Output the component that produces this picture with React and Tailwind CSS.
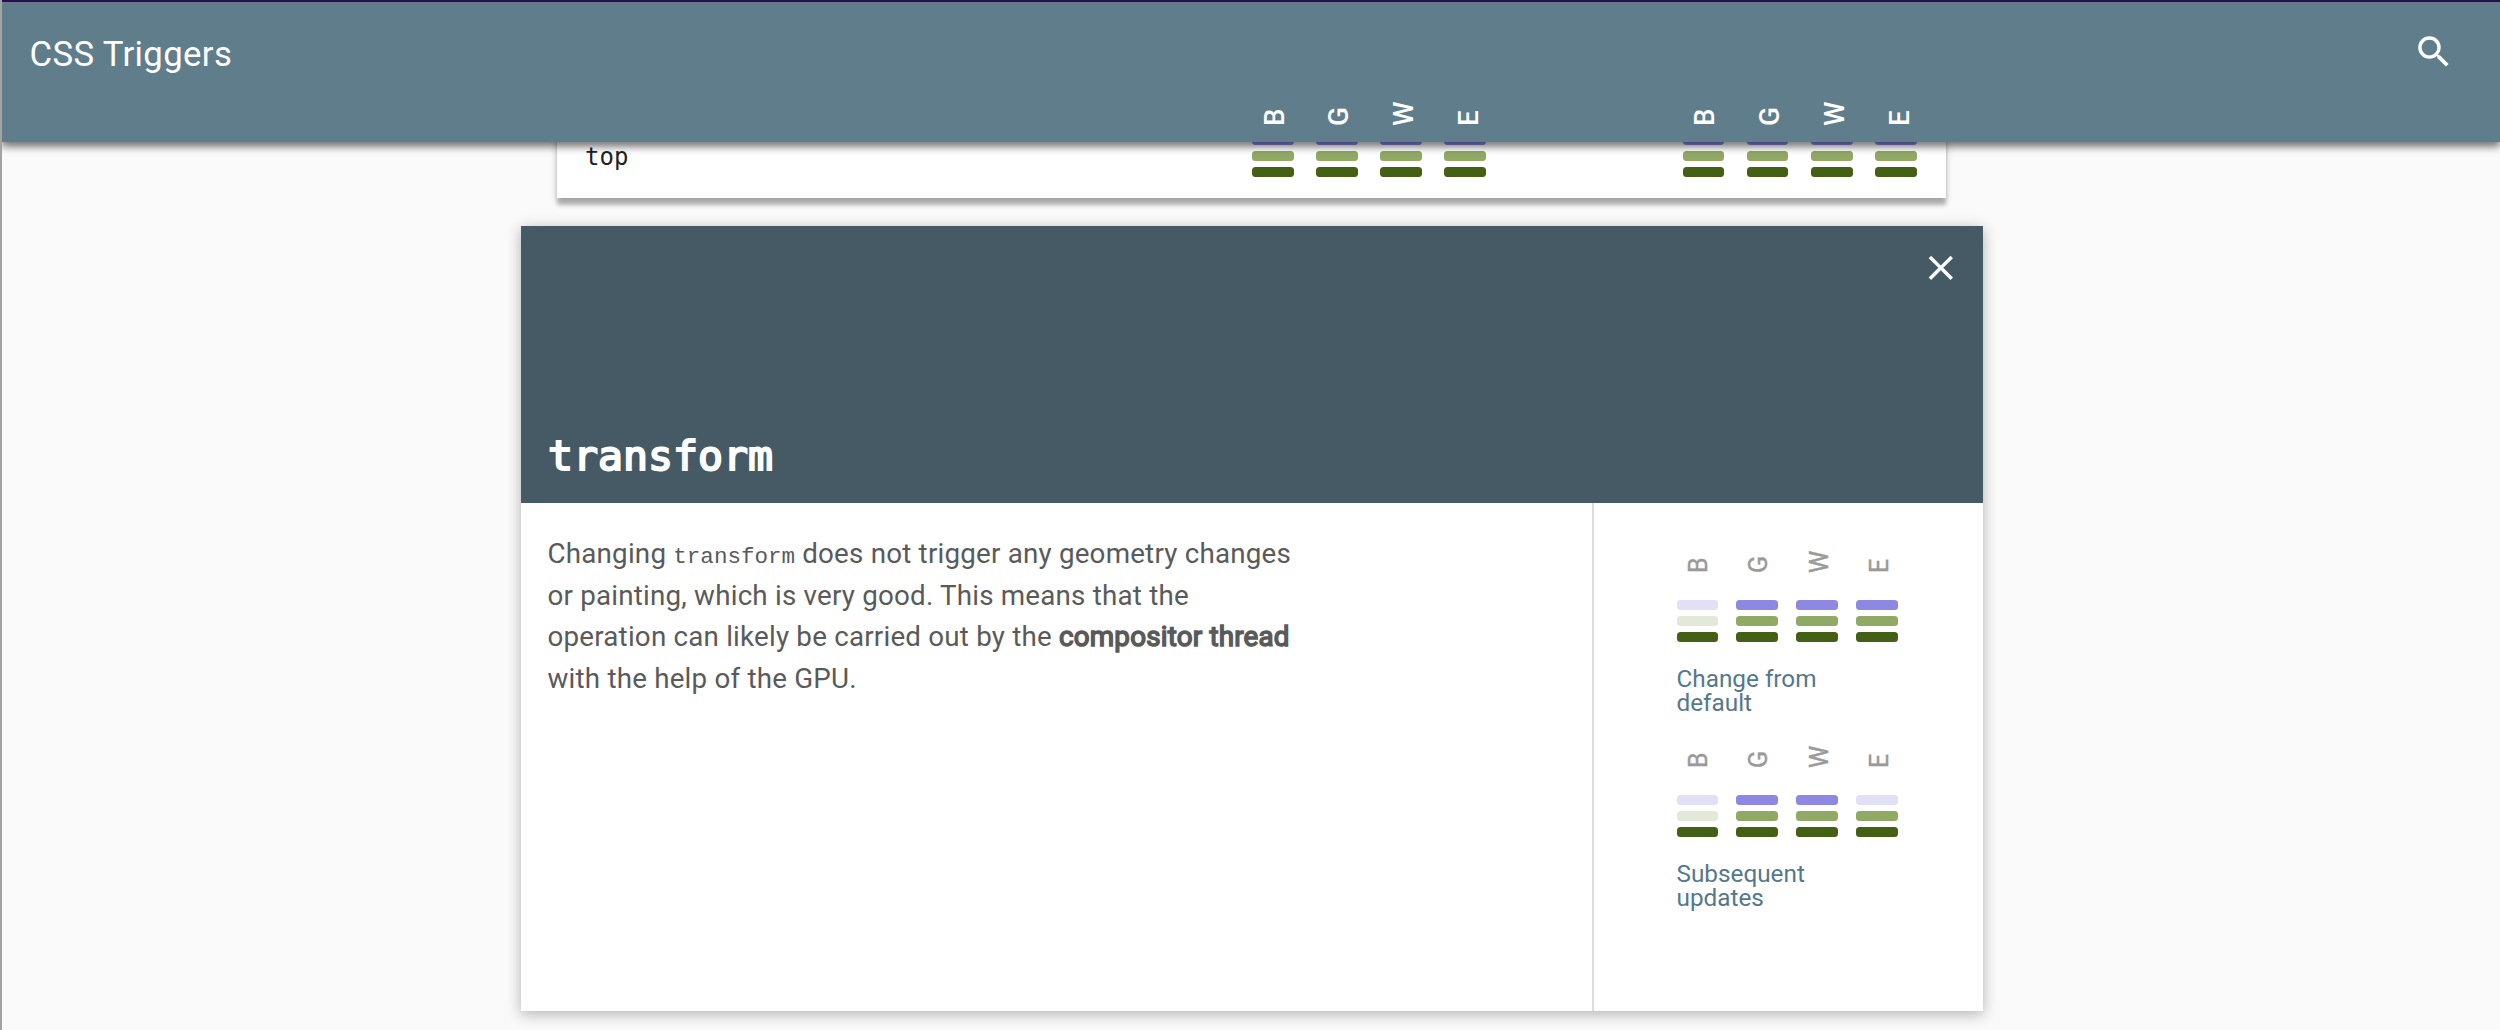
import React from "react";

const ENGINES = ["B", "G", "W", "E"];

const COLORS = {
  layout: "bg-[#8f88e2]",
  paint: "bg-[#90a964]",
  composite: "bg-[#446014]",
  layoutOff: "bg-[#e2e0f7]",
  paintOff: "bg-[#e2e9d8]",
};

function Bars({ layout = true, paint = true }) {
  return (
    <div className="flex w-[41.67px] shrink-0 flex-col gap-[5.4px]">
      <span className={`h-[10.4px] rounded-[3.5px] ${layout ? COLORS.layout : COLORS.layoutOff}`} />
      <span className={`h-[10.4px] rounded-[3.5px] ${paint ? COLORS.paint : COLORS.paintOff}`} />
      <span className={`h-[10.4px] rounded-[3.5px] ${COLORS.composite}`} />
    </div>
  );
}

function HeaderLetters() {
  return (
    <div className="flex items-end gap-[23.2px]">
      {ENGINES.map((e) => (
        <span
          key={e}
          className="h-[27px] w-[41.67px] shrink-0 rotate-180 text-[27.78px] leading-[41.67px] font-medium [writing-mode:vertical-rl]"
        >
          {e}
        </span>
      ))}
    </div>
  );
}

function RowBars() {
  return (
    <div className="flex gap-[22.5px]">
      {ENGINES.map((e) => (
        <Bars key={e} />
      ))}
    </div>
  );
}

function TriggerGroup({ title, layout, paint }) {
  return (
    <section className="h-[195px] w-[226px]">
      <div className="flex gap-[18.6px] pl-[1.5px]">
        {ENGINES.map((e) => (
          <span
            key={e}
            className="h-[26px] w-[41.67px] shrink-0 rotate-180 text-[25px] leading-[41.67px] text-[#9a9a9a] [-webkit-text-stroke:0.4px_#9a9a9a] [writing-mode:vertical-rl]"
          >
            {e}
          </span>
        ))}
      </div>
      <div className="mt-[27px] flex gap-[18.2px]">
        {ENGINES.map((e, i) => (
          <Bars key={e} layout={layout[i]} paint={paint[i]} />
        ))}
      </div>
      <h2 className="mt-[25px] w-[150px] text-[24.3px] leading-[24.3px] text-[#54788a]">{title}</h2>
    </section>
  );
}

export default function App() {
  return (
    <div className="h-[1030px] w-[2500px] overflow-hidden border-l-2 border-[#a3a3a3] bg-[#fafafa] font-[Roboto,sans-serif]">
      <div className="relative z-20 -ml-[2px] h-[2px] bg-[#1d1458]" />
      <header className="relative z-10 h-[140px] border-t border-[#75757f] bg-[#607d8b] text-white shadow-[0_4px_7px_rgba(0,0,0,0.38),0_5px_9px_rgba(0,0,0,0.25)]">
        <div className="flex h-[91px] items-start justify-between pr-[45.3px] pl-[27.5px]">
          <h1 className="mt-[31px] text-[34.72px] leading-[40px] tracking-[0.35px]">CSS Triggers</h1>
          <svg className="mt-[28px] size-[41.67px]" viewBox="0 0 24 24" fill="currentColor">
            <path d="M15.5 14h-.79l-.28-.27A6.471 6.471 0 0 0 16 9.5 6.5 6.5 0 1 0 9.5 16c1.61 0 3.09-.59 4.23-1.57l.27.28v.79l5 4.99L20.49 19l-4.99-5zm-6 0C7.01 14 5 11.99 5 9.5S7.01 5 9.5 5 14 7.01 14 9.5 11.99 14 9.5 14z" />
          </svg>
        </div>
        <div className="flex gap-[194.5px] pt-[5px] pl-[1251.5px]">
          <HeaderLetters />
          <HeaderLetters />
        </div>
      </header>

      <main>
        <div className="-mt-[10px] ml-[555px] flex h-[66px] w-[1389px] bg-white pt-[3px] pl-[28px] shadow-[0_7px_4px_rgba(0,0,0,0.26),0_3px_8px_rgba(0,0,0,0.14)]">
          <div className="w-[667px] pt-[8px] font-['DejaVu_Sans_Mono',monospace] text-[24px] leading-[28px] text-[#212121]">
            top
          </div>
          <div className="flex gap-[196.5px]">
            <RowBars />
            <RowBars />
          </div>
        </div>

        <article className="relative mt-[28px] ml-[519px] h-[785px] w-[1462px] bg-white shadow-[0_3px_14px_rgba(0,0,0,0.3)]">
          <div className="flex h-[277px] flex-col justify-between bg-[#455a64] text-white">
            <button className="mt-[21px] mr-[21px] self-end" aria-label="Close">
              <svg className="size-[41.67px]" viewBox="0 0 24 24" fill="currentColor">
                <path d="M19 6.41 17.59 5 12 10.59 6.41 5 5 6.41 10.59 12 5 17.59 6.41 19 12 13.41 17.59 19 19 17.59 13.41 12z" />
              </svg>
            </button>
            <h1 className="pb-[22px] pl-[27px] font-['DejaVu_Sans_Mono',monospace] text-[41.5px] leading-[50px] [-webkit-text-stroke:2px_white]">
              transform
            </h1>
          </div>
          <div className="flex h-[508px]">
            <div className="w-[1071px] pt-[30px] pl-[26.5px]">
              <p className="w-[755px] text-[27.78px] leading-[41.67px] tracking-[0.2px] text-[#5a5a5a]">
                Changing{" "}
                <code className="font-['Liberation_Mono',monospace] text-[22.57px] leading-none tracking-normal">transform</code>{" "}
                does not trigger any geometry changes or painting, which is very good. This means that the operation
                can likely be carried out by the{" "}
                <strong className="font-normal [-webkit-text-stroke:1.5px_#5a5a5a]">compositor thread</strong> with the
                help of the GPU.
              </p>
            </div>
            <aside className="flex-1 border-l-2 border-[#dcdcdc] pt-[44px] pl-[82.5px]">
              <TriggerGroup
                title="Change from default"
                layout={[false, true, true, true]}
                paint={[false, true, true, true]}
              />
              <TriggerGroup
                title="Subsequent updates"
                layout={[false, true, true, false]}
                paint={[false, true, true, true]}
              />
            </aside>
          </div>
        </article>
      </main>
    </div>
  );
}
